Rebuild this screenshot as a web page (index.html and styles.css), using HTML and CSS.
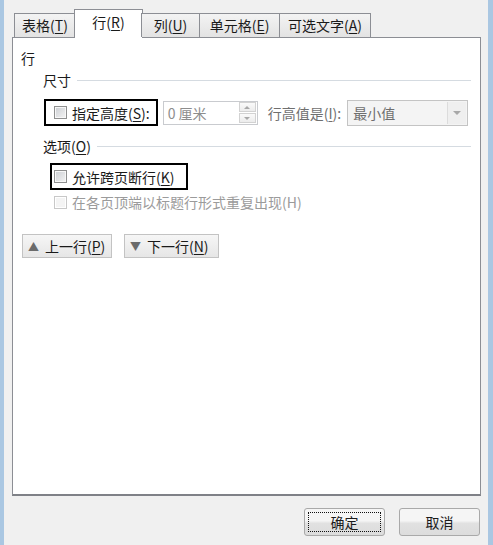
FILE: index.html
```html
<!DOCTYPE html>
<html lang="zh-CN">
<head>
<meta charset="utf-8">
<title>表格属性</title>
<link rel="stylesheet" href="styles.css">
</head>
<body>
<div class="frame">
  <div class="tabs">
    <div class="tab t1">表格(<u>T</u>)</div>
    <div class="tab t2 active">行(<u>R</u>)</div>
    <div class="tab t3">列(<u>U</u>)</div>
    <div class="tab t4">单元格(<u>E</u>)</div>
    <div class="tab t5">可选文字(<u>A</u>)</div>
  </div>
  <div class="panel">
    <div class="title">行</div>
    <div class="group">
      <div class="legend"><span>尺寸</span><span class="rule"></span></div>
      <div class="row1">
        <label class="mark mark1"><span class="cb"></span><span>指定高度(<u>S</u>):</span></label>
        <div class="spin">
          <span class="spin-text">0 厘米</span>
          <span class="spin-btns">
            <span class="sb"><span class="tri-up"></span></span>
            <span class="sb"><span class="tri-down"></span></span>
          </span>
        </div>
        <span class="lbl">行高值是(<u>I</u>):</span>
        <div class="select">
          <span class="select-text">最小值</span>
          <span class="select-btn"><span class="tri-down grey"></span></span>
        </div>
      </div>
      <div class="legend legend2"><span>选项(<u>O</u>)</span><span class="rule"></span></div>
      <label class="mark mark2"><span class="cb"></span><span>允许跨页断行(<u>K</u>)</span></label>
      <label class="disabled-row"><span class="cb cb-dis"></span><span>在各页顶端以标题行形式重复出现(H)</span></label>
    </div>
    <div class="nav">
      <div class="navbtn nb1"><span class="arrow">▲</span><span>上一行(<u>P</u>)</span></div>
      <div class="navbtn nb2"><span class="arrow">▼</span><span>下一行(<u>N</u>)</span></div>
    </div>
  </div>
  <div class="footer">
    <div class="btn focus"><span class="focus-ring">确定</span></div>
    <div class="btn">取消</div>
  </div>
</div>
</body>
</html>
```
FILE: styles.css
```css
* { box-sizing: border-box; }
html, body { margin: 0; padding: 0; }
body {
  width: 493px;
  height: 545px;
  overflow: hidden;
  background: #f0f0f0;
  font-family: "Noto Sans CJK SC", "Microsoft YaHei", sans-serif;
  font-size: 14px;
  color: #1a1a1a;
}
u { text-decoration: underline; text-underline-offset: 2px; text-decoration-thickness: 1px; }
.frame {
  height: 545px;
  display: flex;
  flex-direction: column;
  border-left: 4px solid #aac7e2;
  border-right: 5px solid #aac7e2;
  padding: 9px 7px 0 8px;
}
.tabs {
  display: flex;
  align-items: flex-end;
  height: 28px;
  padding-left: 2px;
  position: relative;
  z-index: 2;
}
.tab {
  height: 24px;
  line-height: 22px;
  text-align: center;
  border: 1px solid #8c8e94;
  border-bottom: none;
  margin-right: -1px;
  background: linear-gradient(#f3f3f3, #e3e3e3);
  white-space: nowrap;
}
.tab.active {
  height: 29px;
  line-height: 24px;
  margin-bottom: -1px;
  background: #fff;
  margin-left: -1px;
  margin-right: -2px;
}
.t1 { width: 62px; }
.t2 { width: 69px; }
.t3 { width: 59px; }
.t4 { width: 81px; }
.t5 { width: 92px; }
.panel {
  width: 469px;
  height: 459px;
  background: #fff;
  border: 1px solid #8c8e94;
  border-bottom: 2px solid #7f8187;
  padding: 0 9px 0 8px;
}
.title { line-height: 20px; margin-top: 10px; }
.group { padding-left: 22px; }
.legend {
  display: flex;
  align-items: center;
  line-height: 20px;
  margin-top: 2px;
}
.legend .rule {
  flex: 1;
  height: 1px;
  background: #d5dbe1;
  margin-left: 6px;
}
.legend2 { margin-top: 10px; }
.row1 {
  display: flex;
  align-items: center;
  margin-top: 9px;
  height: 27px;
}
.mark {
  display: flex;
  align-items: center;
  border: 2px solid #000;
  height: 27px;
  gap: 5px;
}
.mark1 { margin-left: 1px; padding: 0 6px 0 8px; }
.mark2 { margin-left: 7px; margin-top: 7px; width: 138px; padding-left: 2px; }
.cb {
  width: 13px;
  height: 13px;
  flex: none;
  border: 1px solid #8e8f8f;
  background: linear-gradient(135deg, #cbced3, #f4f4f4);
  box-shadow: inset 0 0 0 1px #f7f7f7;
}
.cb-dis {
  border-color: #c8c8c8;
  background: #f4f4f4;
  box-shadow: inset 0 0 0 1px #fff;
}
.spin {
  margin-left: 5px;
  width: 95px;
  height: 24px;
  border: 1px solid #c9cbcf;
  background: #fff;
  display: flex;
  align-items: center;
  justify-content: space-between;
  padding: 0 1px 0 4px;
}
.spin-text { color: #8d8d8d; }
.spin-btns {
  display: flex;
  flex-direction: column;
  gap: 1px;
  width: 17px;
}
.sb {
  height: 10px;
  border: 1px solid #d2d2d2;
  background: linear-gradient(#fafafa, #ececec);
  display: flex;
  align-items: center;
  justify-content: center;
}
.tri-up {
  width: 0; height: 0;
  border-left: 3px solid transparent;
  border-right: 3px solid transparent;
  border-bottom: 3px solid #a8a8a8;
}
.tri-down {
  width: 0; height: 0;
  border-left: 3px solid transparent;
  border-right: 3px solid transparent;
  border-top: 3px solid #a8a8a8;
}
.tri-down.grey { border-left-width: 4px; border-right-width: 4px; border-top-width: 4px; }
.lbl { margin-left: 10px; color: #6f6f6f; }
.select {
  margin-left: 6px;
  width: 121px;
  height: 26px;
  border: 1px solid #c4c4c4;
  background: #f4f4f4;
  display: flex;
  align-items: center;
  justify-content: space-between;
  padding: 0 1px 0 5px;
}
.select-text { color: #6e6e6e; }
.select-btn {
  width: 19px;
  height: 22px;
  border-left: 1px solid #dcdcdc;
  background: #efefef;
  display: flex;
  align-items: center;
  justify-content: center;
}
.disabled-row {
  display: flex;
  align-items: center;
  gap: 5px;
  height: 20px;
  margin-top: 2px;
  margin-left: 11px;
  color: #9b9b9b;
}
.nav {
  display: flex;
  gap: 12px;
  margin-top: 22px;
  margin-left: 1px;
}
.navbtn {
  height: 24px;
  border: 1px solid #c3c3c3;
  background: linear-gradient(#f6f6f6, #e6e6e6);
  display: flex;
  align-items: center;
  padding-left: 5px;
  gap: 6px;
}
.nb1 { width: 90px; }
.nb2 { width: 95px; }
.arrow { font-size: 11px; color: #6b6b6b; }
.footer {
  display: flex;
  justify-content: flex-end;
  gap: 14px;
  margin-top: 12px;
  padding-right: 1px;
}
.btn {
  width: 81px;
  height: 28px;
  border: 1px solid #a9a9a9;
  border-radius: 3px;
  background: linear-gradient(#f5f5f5 45%, #e1e1e1 55%, #dcdcdc);
  display: flex;
  align-items: center;
  justify-content: center;
}
.btn.focus { padding: 3px; }
.focus-ring {
  flex: 1;
  align-self: stretch;
  border: 1px dotted #111;
  display: flex;
  align-items: center;
  justify-content: center;
}
```
